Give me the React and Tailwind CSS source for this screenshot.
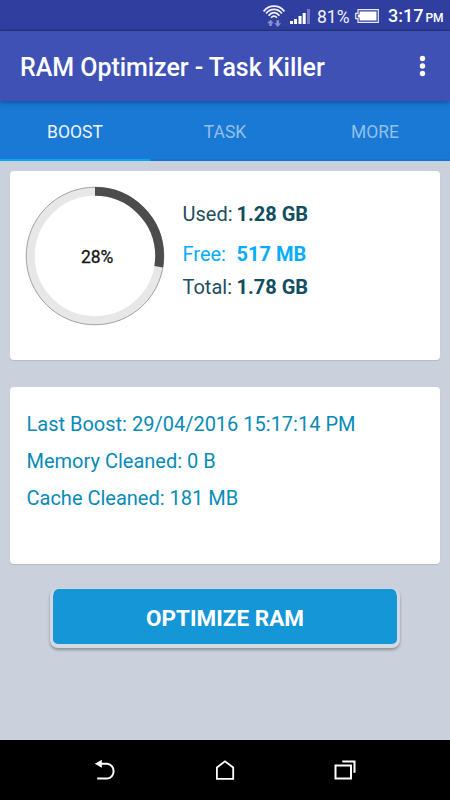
import { useState } from "react";

const TABS = ["BOOST", "TASK", "MORE"];

const MEMORY = [
  { label: "Used:", value: "1.28 GB", row: "h-10", labelColor: "text-[#204e60]", valueColor: "text-[#104e60]" },
  { label: "Free:", value: "517 MB", row: "h-[33px]", labelColor: "text-[#06adf8]", valueColor: "text-[#06adf8]" },
  { label: "Total:", value: "1.78 GB", row: "h-10", labelColor: "text-[#204e60]", valueColor: "text-[#104e60]" },
];

const HISTORY = [
  "Last Boost: 29/04/2016 15:17:14 PM",
  "Memory Cleaned: 0 B",
  "Cache Cleaned: 181 MB",
];

function WifiIcon() {
  return (
    <svg width="22" height="24" viewBox="0 0 22 24" fill="none">
      <g stroke="#eef0fa" strokeWidth="1.7">
        <path d="M0.6 7.400C6 0.400 16 0.400 21.400 7.400" />
        <path d="M3.100 9.500C7.300 4.100 14.700 4.100 18.900 9.500" />
        <path d="M5.600 11.700C8.800 7.600 13.200 7.600 16.400 11.700" />
        <path d="M8.100 13.700C9.900 11.500 12.100 11.500 13.900 13.700" />
      </g>
      <path d="M7.500 15.800l3.400 3.500H8.800V22H6.200v-2.700H4.100zM14.800 23l-3.400-3.700h2.100v-3h2.600v3h2.100z" fill="#8791cc" />
    </svg>
  );
}

function SignalIcon() {
  return (
    <svg width="20" height="16" viewBox="0 0 20 16">
      <path d="M0 12h3v3H0zM4 10h3v5H4zM8.500 7h3v8h-3zM12.700 4h3v11h-3z" fill="#fff" />
      <path d="M17 0h3v15h-3z" fill="#727dc2" />
    </svg>
  );
}

function BatteryIcon() {
  return (
    <svg width="24" height="14" viewBox="0 0 24 14">
      <path d="M3 .7h20.300v12.600H3V9.600H.7V4.400H3z" fill="none" stroke="#e9ebf7" strokeWidth="1.200" />
      <path d="M4.600 2.500h16.900v9H4.600V8.500H2.800v-3h1.800z" fill="#fff" />
    </svg>
  );
}

function StatusBar() {
  return (
    <div className="h-[31px] shrink-0 bg-[#303f9f] border-b border-[#2b3785] flex items-center text-white pl-[263px]">
      <div className="mt-[1px]"><WifiIcon /></div>
      <div className="ml-[5px] mt-[3px]"><SignalIcon /></div>
      <span className="ml-[7px] w-9 text-[17.500px] leading-5 mt-[3px] text-[#f0f2fb]">81%</span>
      <div className="ml-[2px] mt-[1px]"><BatteryIcon /></div>
      <span className="ml-[9px] text-[18px] leading-5 font-medium whitespace-nowrap mt-[3px]">
        3:17<span className="text-[12px] ml-[2px]">PM</span>
      </span>
    </div>
  );
}

function MemoryRing({ percent }) {
  const r = 64.6;
  const length = 2 * Math.PI * r;
  return (
    <div className="grid place-items-center size-[140px]">
      <svg className="col-start-1 row-start-1" width="140" height="140" viewBox="0 0 140 140" fill="none">
        <circle cx="70" cy="70" r={r} stroke="#e7e7e7" strokeWidth="8.800" />
        <circle cx="70" cy="70" r="68.800" stroke="#858585" strokeWidth="0.700" />
        <circle cx="70" cy="70" r={r} stroke="#4c4c4c" strokeWidth="8.800"
          strokeDasharray={`${(length * (percent - 0.4)) / 100} ${length}`}
          transform="rotate(-90 70 70)" />
      </svg>
      <span className="col-start-1 row-start-1 text-[17.500px] tracking-[-0.1px] leading-5 text-[#151515] ml-1 mt-[1px] [-webkit-text-stroke:0.3px_#151515]">{percent}%</span>
    </div>
  );
}

function NavBar() {
  return (
    <div className="h-[60px] shrink-0 bg-black grid grid-cols-[1fr_120px_120px_120px_1fr] items-center">
      <button aria-label="Back" className="col-start-2 justify-self-center">
        <svg width="24" height="24" viewBox="0 0 24 24" fill="none">
          <path d="M6 5.800h8.500a6.900 7.400 0 0 1 0 14.700H4.200" stroke="#fff" strokeWidth="2" />
          <path d="M1.800 5.800l7-4v8z" fill="#fff" />
        </svg>
      </button>
      <button aria-label="Home" className="justify-self-center">
        <svg width="24" height="24" viewBox="0 0 24 24" fill="none" stroke="#fff" strokeWidth="1.800">
          <path d="M3.900 20.800V9.500L12 3.300l8.200 6.200v11.300z" />
        </svg>
      </button>
      <button aria-label="Recent apps" className="justify-self-center">
        <svg width="24" height="24" viewBox="0 0 24 24" fill="none" stroke="#fff" strokeWidth="2">
          <path d="M2.500 7.500h15.500v13H2.500zM9.300 3.500h12.200v11.200" />
        </svg>
      </button>
    </div>
  );
}

export default function App() {
  const [tab, setTab] = useState("BOOST");

  return (
    <div className="w-[450px] h-[800px] flex flex-col overflow-hidden bg-[#cad0dc] font-['Roboto',sans-serif]">
      <StatusBar />

      <header className="relative z-10 h-[70px] shrink-0 bg-[#3f51b5] shadow-[0_1px_5px_rgba(0,0,0,0.4)] flex items-center justify-between pl-5 pr-[24px]">
        <h1 className="text-[25px] tracking-[-0.04px] leading-8 font-medium text-white whitespace-nowrap mt-[3px]">RAM Optimizer - Task Killer</h1>
        <button aria-label="More options">
          <svg width="7" height="22" viewBox="0 0 7 22" fill="#fff">
            <circle cx="3.500" cy="3.500" r="2.700" />
            <circle cx="3.500" cy="11" r="2.700" />
            <circle cx="3.500" cy="18.500" r="2.700" />
          </svg>
        </button>
      </header>

      <nav className="h-[60px] shrink-0 grid grid-cols-3 bg-[#1979d5]">
        {TABS.map((name) => (
          <button key={name} onClick={() => setTab(name)}
            className={`text-[17.500px] leading-5 pt-[3px] border-b-2 ${
              tab === name ? "text-[#edf4fc] border-[#03a9f4]" : "text-[#93c0ea] border-[#1474d1]"
            }`}>
            {name}
          </button>
        ))}
      </nav>

      <main className="flex-1 flex flex-col px-[10px] pt-[10px]">
        {/* Memory usage */}
        <section className="h-[189px] shrink-0 bg-white rounded shadow-[0_1px_1px_rgba(0,0,0,0.1)] flex items-start pl-[15px] pt-[15px]">
          <MemoryRing percent={28} />
          <div className="ml-[17.500px] mt-4 text-[20px] leading-6">
            {MEMORY.map((m) => (
              <div key={m.label} className={`flex ${m.row}`}>
                <span className={`w-[54px] ${m.labelColor}`}>{m.label}</span>
                <span className={`font-bold whitespace-nowrap ${m.valueColor}`}>{m.value}</span>
              </div>
            ))}
          </div>
        </section>

        {/* Last run */}
        <section className="mt-[27px] h-[177px] shrink-0 bg-white rounded shadow-[0_1px_1px_rgba(0,0,0,0.1)] pl-[16.500px] pt-[19px] text-[20px] leading-[37px] text-[#078bb8]">
          {HISTORY.map((line) => (
            <p key={line}>{line}</p>
          ))}
        </section>

        <button className="mt-[24px] mx-auto w-[350px] h-[60px] shrink-0 rounded-lg bg-[#1596d6] bg-clip-padding border-[#d3d8e3] border-x-[3px] border-t border-b-4 shadow-[0_2px_3px_rgba(0,0,0,0.3)] text-[22.500px] font-bold text-white pt-[4px]">
          OPTIMIZE RAM
        </button>
      </main>

      <NavBar />
    </div>
  );
}
